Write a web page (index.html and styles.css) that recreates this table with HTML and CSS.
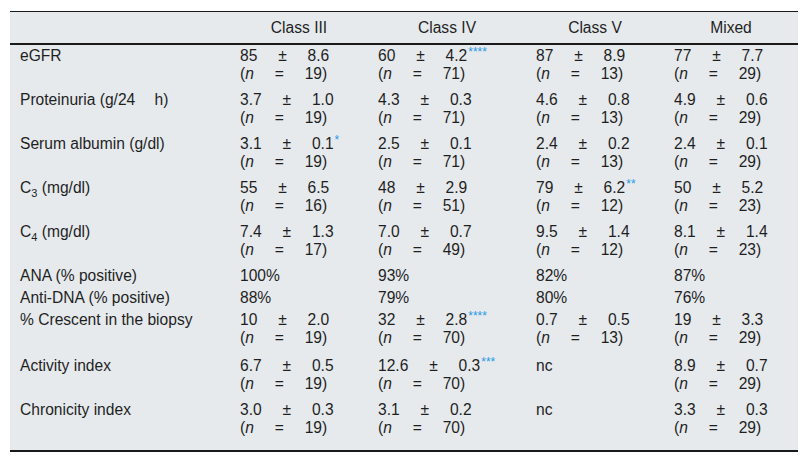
FILE: index.html
```html
<!DOCTYPE html>
<html lang="en">
<head>
<meta charset="utf-8">
<title>Table</title>
<link rel="stylesheet" href="styles.css">
</head>
<body>
<table class="tbl">
  <colgroup>
    <col class="c-label">
    <col class="c-3">
    <col class="c-4">
    <col class="c-5">
    <col class="c-m">
  </colgroup>
  <thead>
    <tr><th></th><th>Class III</th><th>Class IV</th><th>Class V</th><th>Mixed</th></tr>
  </thead>
  <tbody>
    <tr>
      <td>eGFR</td>
      <td><div class="v">85 ± 8.6</div><div class="n">(<i>n</i> = 19)</div></td>
      <td><div class="v">60 ± 4.2<span class="sup">****</span></div><div class="n">(<i>n</i> = 71)</div></td>
      <td><div class="v">87 ± 8.9</div><div class="n">(<i>n</i> = 13)</div></td>
      <td><div class="v">77 ± 7.7</div><div class="n">(<i>n</i> = 29)</div></td>
    </tr>
    <tr>
      <td>Proteinuria (<span class="ws">g/24 h</span>)</td>
      <td><div class="v">3.7 ± 1.0</div><div class="n">(<i>n</i> = 19)</div></td>
      <td><div class="v">4.3 ± 0.3</div><div class="n">(<i>n</i> = 71)</div></td>
      <td><div class="v">4.6 ± 0.8</div><div class="n">(<i>n</i> = 13)</div></td>
      <td><div class="v">4.9 ± 0.6</div><div class="n">(<i>n</i> = 29)</div></td>
    </tr>
    <tr>
      <td>Serum albumin (g/dl)</td>
      <td><div class="v">3.1 ± 0.1<span class="sup">*</span></div><div class="n">(<i>n</i> = 19)</div></td>
      <td><div class="v">2.5 ± 0.1</div><div class="n">(<i>n</i> = 71)</div></td>
      <td><div class="v">2.4 ± 0.2</div><div class="n">(<i>n</i> = 13)</div></td>
      <td><div class="v">2.4 ± 0.1</div><div class="n">(<i>n</i> = 29)</div></td>
    </tr>
    <tr>
      <td>C<sub class="sub">3</sub> (mg/dl)</td>
      <td><div class="v">55 ± 6.5</div><div class="n">(<i>n</i> = 16)</div></td>
      <td><div class="v">48 ± 2.9</div><div class="n">(<i>n</i> = 51)</div></td>
      <td><div class="v">79 ± 6.2<span class="sup">**</span></div><div class="n">(<i>n</i> = 12)</div></td>
      <td><div class="v">50 ± 5.2</div><div class="n">(<i>n</i> = 23)</div></td>
    </tr>
    <tr>
      <td>C<sub class="sub">4</sub> (mg/dl)</td>
      <td><div class="v">7.4 ± 1.3</div><div class="n">(<i>n</i> = 17)</div></td>
      <td><div class="v">7.0 ± 0.7</div><div class="n">(<i>n</i> = 49)</div></td>
      <td><div class="v">9.5 ± 1.4</div><div class="n">(<i>n</i> = 12)</div></td>
      <td><div class="v">8.1 ± 1.4</div><div class="n">(<i>n</i> = 23)</div></td>
    </tr>
    <tr>
      <td>ANA (% positive)</td>
      <td>100%</td>
      <td>93%</td>
      <td>82%</td>
      <td>87%</td>
    </tr>
    <tr>
      <td>Anti-DNA (% positive)</td>
      <td>88%</td>
      <td>79%</td>
      <td>80%</td>
      <td>76%</td>
    </tr>
    <tr class="tall">
      <td>% Crescent in the biopsy</td>
      <td><div class="v">10 ± 2.0</div><div class="n">(<i>n</i> = 19)</div></td>
      <td><div class="v">32 ± 2.8<span class="sup">****</span></div><div class="n">(<i>n</i> = 70)</div></td>
      <td><div class="v">0.7 ± 0.5</div><div class="n">(<i>n</i> = 13)</div></td>
      <td><div class="v">19 ± 3.3</div><div class="n">(<i>n</i> = 29)</div></td>
    </tr>
    <tr>
      <td>Activity index</td>
      <td><div class="v">6.7 ± 0.5</div><div class="n">(<i>n</i> = 19)</div></td>
      <td><div class="v">12.6 ± 0.3<span class="sup">***</span></div><div class="n">(<i>n</i> = 70)</div></td>
      <td>nc</td>
      <td><div class="v">8.9 ± 0.7</div><div class="n">(<i>n</i> = 29)</div></td>
    </tr>
    <tr class="last">
      <td>Chronicity index</td>
      <td><div class="v">3.0 ± 0.3</div><div class="n">(<i>n</i> = 19)</div></td>
      <td><div class="v">3.1 ± 0.2</div><div class="n">(<i>n</i> = 70)</div></td>
      <td>nc</td>
      <td><div class="v">3.3 ± 0.3</div><div class="n">(<i>n</i> = 29)</div></td>
    </tr>
  </tbody>
</table>
</body>
</html>
```

FILE: styles.css
```css
html, body {
  margin: 0;
  padding: 0;
  background: #ffffff;
}

body {
  font-family: "Liberation Sans", Arial, sans-serif;
  font-size: 15.6px;
  line-height: 18px;
  color: #1f1f1f;
  padding: 11px 0 0 10px;
}

.tbl {
  border-collapse: separate;
  border-spacing: 0;
  table-layout: fixed;
  width: 788px;
  background: #e6eaed;
}

.c-label { width: 220px; }
.c-3 { width: 138px; }
.c-4 { width: 158px; }
.c-5 { width: 138px; }
.c-m { width: 134px; }

.tbl th {
  font-weight: normal;
  text-align: center;
  padding: 7px 10px 6px;
  border-top: 1px solid #1a1a1a;
  border-bottom: 2px solid #1a1a1a;
}

.tbl td {
  text-align: left;
  vertical-align: top;
  padding: 2px 10px;
  white-space: nowrap;
}

.tbl tr.tall td {
  padding-bottom: 4px;
}

.tbl tr.last td {
  padding-bottom: 9px;
  border-bottom: 2px solid #1a1a1a;
}

.v, .n {
  word-spacing: 16.5px;
}

.n {
  margin-bottom: 4px;
}

.ws {
  word-spacing: 15px;
}

.sup {
  font-size: 12px;
  color: #2a98e6;
  vertical-align: 5px;
  line-height: 0;
  margin-left: 1px;
  word-spacing: 0;
}

.sub {
  font-size: 11px;
  vertical-align: -4px;
  line-height: 0;
}
```
